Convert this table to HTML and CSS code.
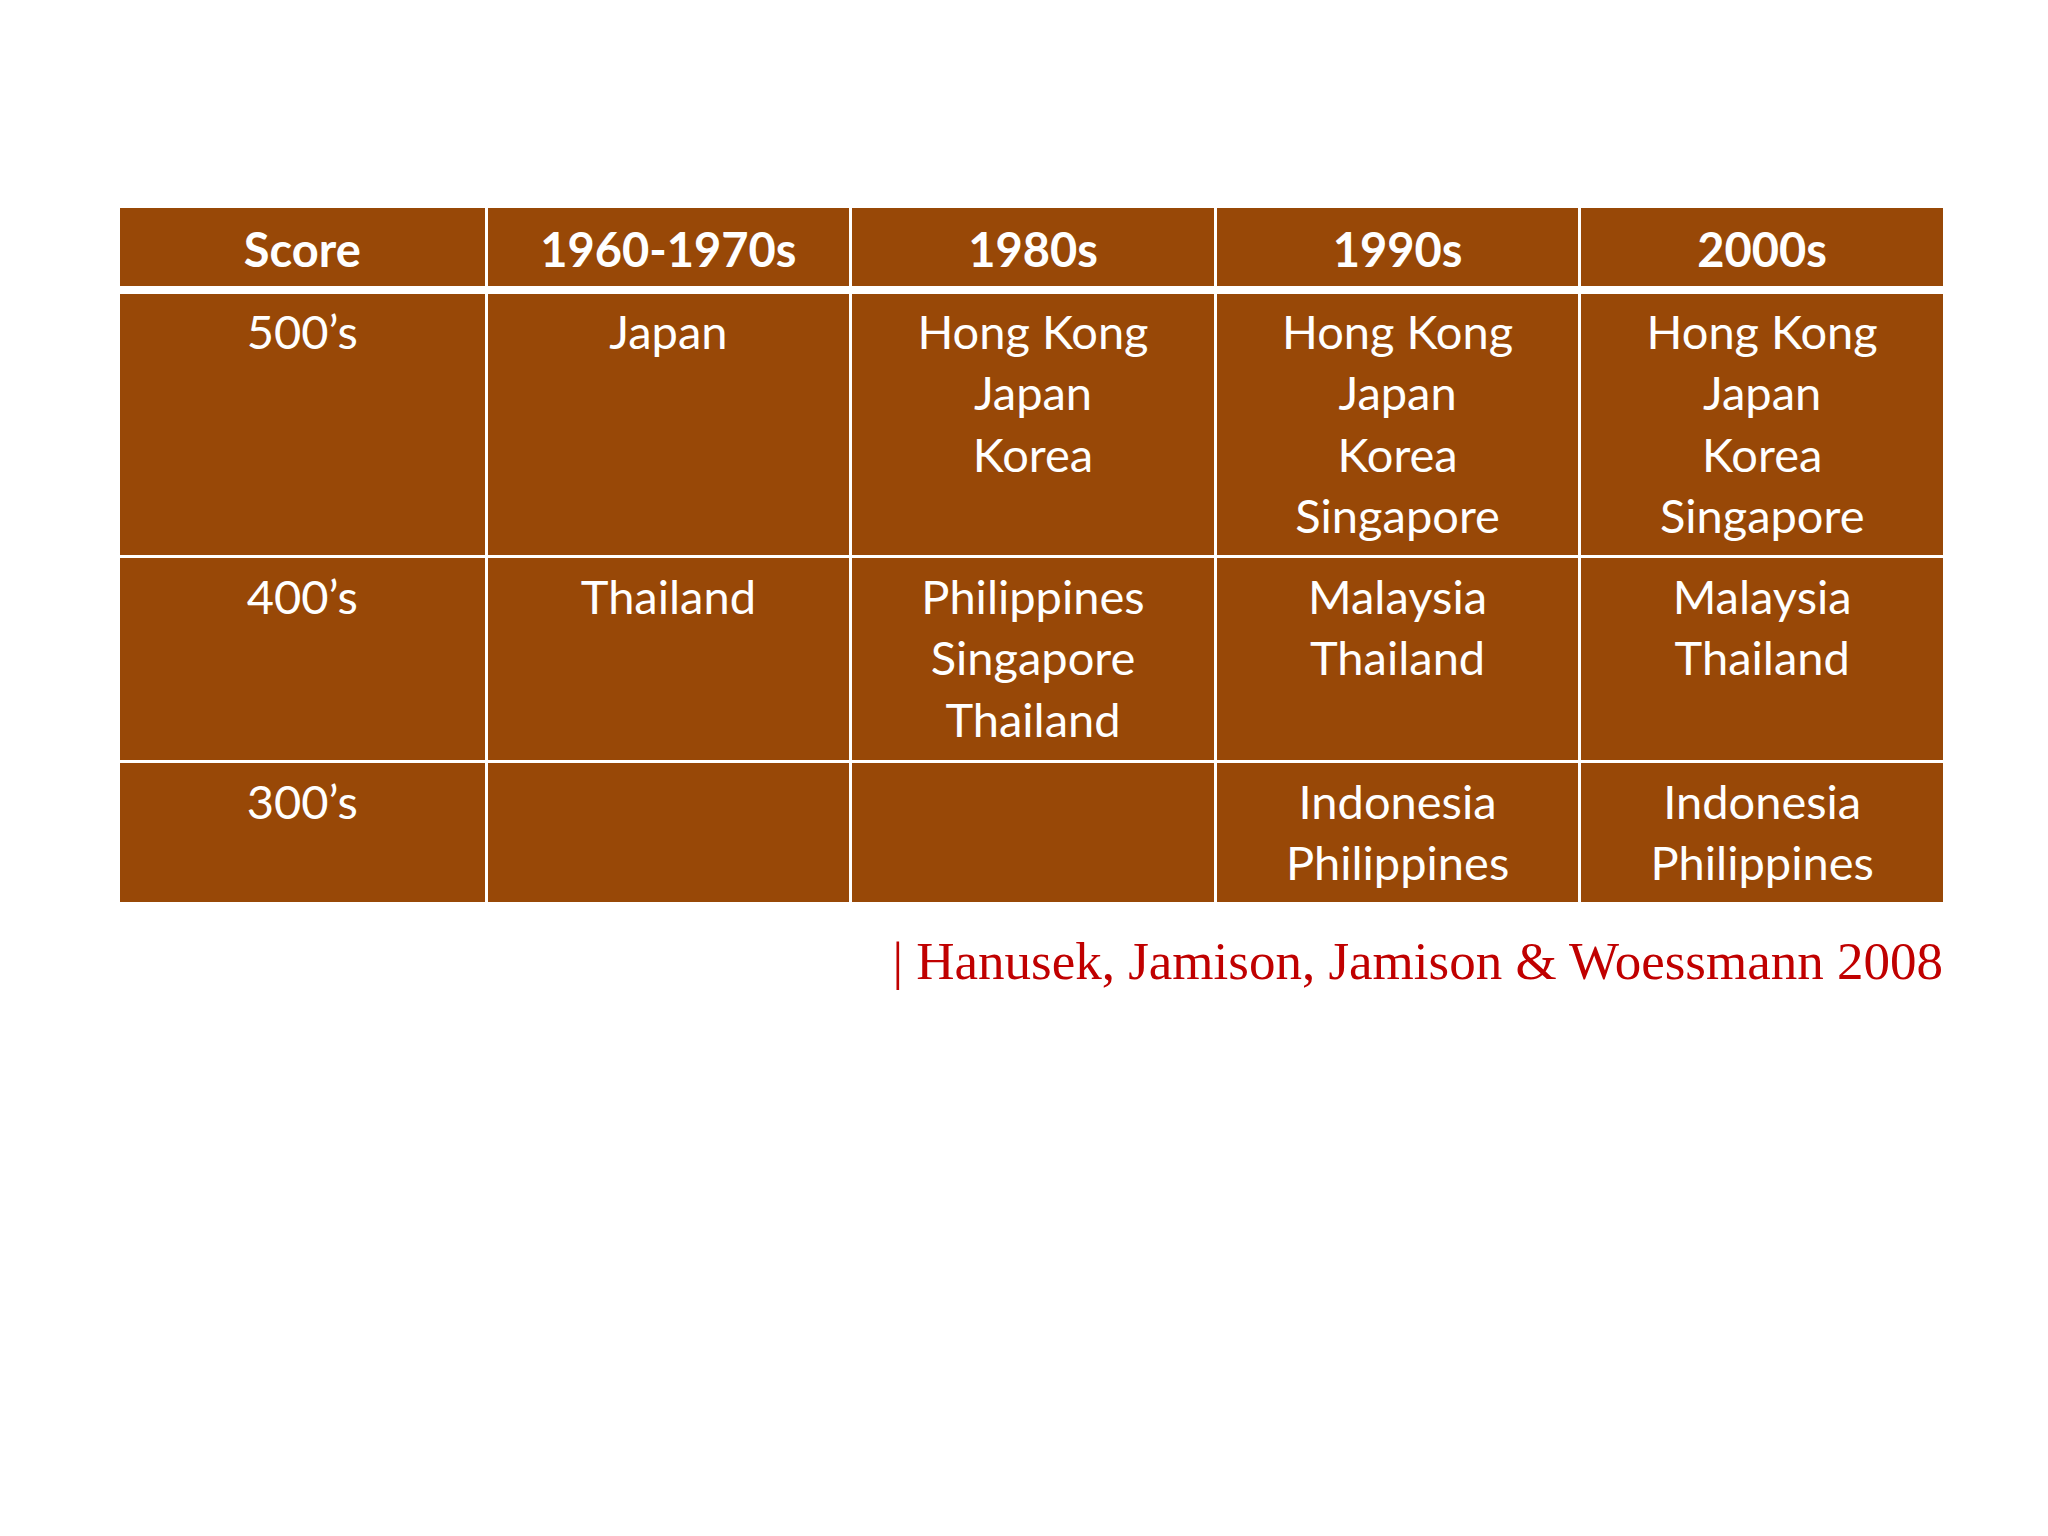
FILE: index.html
```html
<!DOCTYPE html>
<html lang="en">
<head>
<meta charset="utf-8">
<title>Scores by decade</title>
<link rel="stylesheet" href="styles.css">
</head>
<body>
<main class="slide">
  <table class="scores">
    <colgroup>
      <col class="col"><col class="col"><col class="col"><col class="col"><col class="col">
    </colgroup>
    <thead>
      <tr class="head-row">
        <th>Score</th>
        <th>1960-1970s</th>
        <th>1980s</th>
        <th>1990s</th>
        <th>2000s</th>
      </tr>
    </thead>
    <tbody>
      <tr class="row row-500">
        <td>500’s</td>
        <td>Japan</td>
        <td>Hong Kong<br>Japan<br>Korea</td>
        <td>Hong Kong<br>Japan<br>Korea<br>Singapore</td>
        <td>Hong Kong<br>Japan<br>Korea<br>Singapore</td>
      </tr>
      <tr class="row row-400">
        <td>400’s</td>
        <td>Thailand</td>
        <td>Philippines<br>Singapore<br>Thailand</td>
        <td>Malaysia<br>Thailand</td>
        <td>Malaysia<br>Thailand</td>
      </tr>
      <tr class="row row-300">
        <td>300’s</td>
        <td></td>
        <td></td>
        <td>Indonesia<br>Philippines</td>
        <td>Indonesia<br>Philippines</td>
      </tr>
    </tbody>
  </table>
  <p class="citation">| Hanusek, Jamison, Jamison &amp; Woessmann 2008</p>
</main>
</body>
</html>
```

FILE: styles.css
```css
html, body {
  margin: 0;
  padding: 0;
  background: #ffffff;
}

.slide {
  width: 2048px;
  height: 1536px;
  box-sizing: border-box;
  padding: 208px 0 0 120px;
}

.scores {
  width: 1823px;
  table-layout: fixed;
  border-collapse: separate;
  border-spacing: 0;
  font-family: Lato, "Open Sans", sans-serif;
  color: #ffffff;
  font-size: 47px;
}

.scores th,
.scores td {
  background: #984807;
  text-align: center;
  padding: 0;
  border-left: 3px solid #ffffff;
  box-sizing: border-box;
}

.scores th:first-child,
.scores td:first-child {
  border-left: none;
}

.head-row th {
  height: 78px;
  font-weight: 700;
  vertical-align: middle;
  line-height: 1;
  padding-top: 4px;
}

.row td {
  vertical-align: top;
  font-weight: 400;
  line-height: 61.4px;
  padding-top: 8px;
}

.row-500 td {
  border-top: 8px solid #ffffff;
  height: 269px;
  padding-top: 7px;
}

.row-400 td {
  border-top: 3px solid #ffffff;
  height: 205px;
}

.row-300 td {
  border-top: 3px solid #ffffff;
  height: 142px;
}

.citation {
  width: 1823px;
  margin: 28px 0 0 0;
  text-align: right;
  font-family: "Liberation Serif", "Times New Roman", serif;
  font-size: 53px;
  line-height: 1.2;
  color: #c00000;
}
```
